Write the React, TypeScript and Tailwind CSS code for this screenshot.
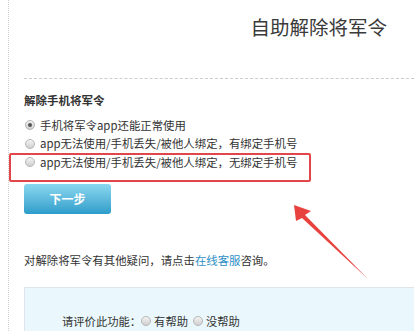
import React from "react";

const font = { fontFamily: '"Noto Sans CJK SC", "Noto Sans", sans-serif' };

function Radio({ checked }: { checked?: boolean }) {
  return (
    <span className="inline-flex h-[10px] w-[10px] shrink-0 items-center justify-center rounded-full border border-[#b5b5b5] bg-gradient-to-b from-[#f4f4f4] to-[#cfcfcf]">
      {checked && <span className="h-[4px] w-[4px] rounded-full bg-[#555]" />}
    </span>
  );
}

export default function App() {
  return (
    <div className="relative h-[331px] w-[414px] overflow-hidden bg-white text-[#333]" style={font}>
      <div className="flex h-full">
        <div className="w-[8px] shrink-0" />
        <div className="min-w-0 flex-1 overflow-hidden border-l border-dotted border-[#cfcfcf] pl-[15px]">
          <div className="pr-[27px] pt-[17px] text-right text-[19.5px] leading-[20px] text-[#3a3a3a]">
            自助解除将军令
          </div>
          <div className="mt-[41px] border-t border-dashed border-[#cccccc]" />
          <div className="mt-[13px] text-[11.5px] font-bold leading-[16px]">解除手机将军令</div>
          <div className="mt-[8px] flex flex-col text-[11.4px]">
            <label className="flex h-[18.5px] items-center gap-[5px] pl-[1px]">
              <Radio checked />
              <span>手机将军令app还能正常使用</span>
            </label>
            <label className="flex h-[18.5px] items-center gap-[5px] pl-[1px]">
              <Radio />
              <span>app无法使用/手机丢失/被他人绑定，有绑定手机号</span>
            </label>
            <label className="flex h-[18.5px] items-center gap-[5px] pl-[1px]">
              <Radio />
              <span>app无法使用/手机丢失/被他人绑定，无绑定手机号</span>
            </label>
          </div>
          <button className="mt-[12px] flex h-[30px] w-[87px] items-center justify-center rounded-[3px] bg-gradient-to-b from-[#8ad8f0] to-[#2b9dca] text-[12px] font-bold text-white">
            下一步
          </button>
          <div className="mt-[38px] text-[11.4px] leading-[16px]">
            对解除将军令有其他疑问，请点击<span className="text-[#2f8fc6]">在线客服</span>咨询。
          </div>
          <div className="mt-[19px] h-[60px] w-[420px] border border-[#dfe5e8] bg-[#eaf8fd] pl-[37px] pt-[25px]">
            <div className="flex items-center text-[11.3px] leading-[16px]">
              <span>请评价此功能：</span>
              <span className="flex items-center gap-[3px]">
                <Radio />
                <span>有帮助</span>
              </span>
              <span className="ml-[5px] flex items-center gap-[3px]">
                <Radio />
                <span>没帮助</span>
              </span>
            </div>
          </div>
        </div>
      </div>
      <div className="absolute left-[9px] top-[153px] h-[29px] w-[302px] rounded-[2px] border-2 border-[#e2454a]" />
      <svg className="absolute left-0 top-0" width="414" height="331" viewBox="0 0 414 331">
        <polygon points="294,205 311,211 305,215 368,279 302,218 296,221" fill="#e8423f" />
      </svg>
    </div>
  );
}
